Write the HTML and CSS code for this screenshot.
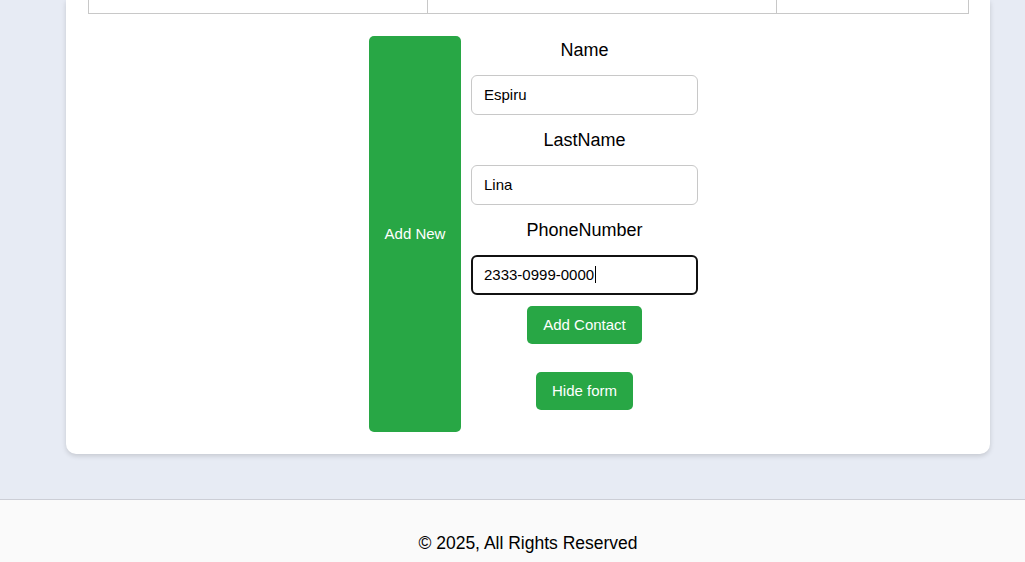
FILE: index.html
```html
<!DOCTYPE html>
<html lang="en">
<head>
<meta charset="utf-8">
<title>Contacts</title>
<link rel="stylesheet" href="styles.css">
</head>
<body>
<main class="page">
  <section class="card">
    <table class="contacts">
      <colgroup>
        <col class="c1"><col class="c2"><col class="c3">
      </colgroup>
      <tbody>
        <tr><td></td><td></td><td></td></tr>
      </tbody>
    </table>
    <div class="add-area">
      <button class="btn add-new" type="button">Add New</button>
      <form class="contact-form">
        <label class="label first" for="name">Name</label>
        <input class="field" id="name" type="text" value="Espiru">
        <label class="label" for="lastname">LastName</label>
        <input class="field" id="lastname" type="text" value="Lina">
        <label class="label" for="phone">PhoneNumber</label>
        <div class="field focused">2333-0999-0000<span class="caret"></span></div>
        <button class="btn small add-contact" type="button">Add Contact</button>
        <button class="btn small hide-form" type="button">Hide form</button>
      </form>
    </div>
  </section>
</main>
<footer class="footer">© 2025, All Rights Reserved</footer>
</body>
</html>
```
FILE: styles.css
```css
* { box-sizing: border-box; }
html, body { margin: 0; padding: 0; }
body {
  background: #e7ebf4;
  font-family: "Liberation Sans", Arial, sans-serif;
  color: #000;
  height: 562px;
  overflow: hidden;
}
.page {
  padding: 0 35px 0 66px;
  height: 499px;
}
.card {
  width: 924px;
  background: #fff;
  border-radius: 0 0 10px 10px;
  box-shadow: 0 2px 5px rgba(0,0,0,0.15);
  padding: 0 22px 22px 22px;
}
.contacts {
  width: 880px;
  border-collapse: collapse;
  table-layout: fixed;
}
.contacts .c1 { width: 339px; }
.contacts .c2 { width: 349px; }
.contacts .c3 { width: 192px; }
.contacts td {
  border: 1px solid #c8c8c8;
  border-top: none;
  height: 13px;
  padding: 0;
}
.add-area {
  display: flex;
  justify-content: center;
  gap: 10px;
  padding-top: 22px;
  padding-left: 11px;
}
.btn {
  background: #28a745;
  color: #fff;
  border: none;
  border-radius: 5px;
  font-family: "Liberation Sans", Arial, sans-serif;
  font-size: 15px;
  cursor: pointer;
}
.add-new {
  width: 92px;
  height: 396px;
  padding: 0;
}
.contact-form {
  width: 227px;
  display: flex;
  flex-direction: column;
  align-items: center;
}
.label {
  font-size: 18px;
  line-height: 21px;
  margin: 15px 0 14px;
}
.label.first { margin-top: 4px; }
.field {
  width: 227px;
  height: 40px;
  border: 1px solid #c8c8c8;
  border-radius: 6px;
  padding: 0 12px;
  font-family: "Liberation Sans", Arial, sans-serif;
  font-size: 15px;
  color: #000;
  outline: none;
}
.focused {
  border: 2px solid #111;
  padding: 0 11px;
  display: flex;
  align-items: center;
}
.caret {
  display: inline-block;
  width: 1px;
  height: 17px;
  background: #000;
  margin-left: 1px;
}
.small {
  height: 38px;
  padding: 0 16px;
}
.add-contact { margin-top: 11px; }
.hide-form { margin-top: 28px; }
.footer {
  background: #fafafa;
  border-top: 1px solid #ccced6;
  height: 63px;
  padding: 33px 0 0 31px;
  text-align: center;
  font-size: 17.5px;
  line-height: 21px;
}
```
